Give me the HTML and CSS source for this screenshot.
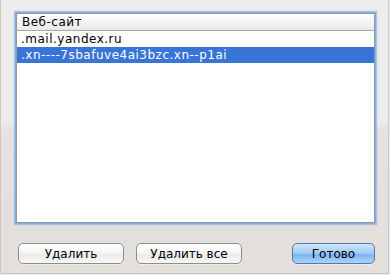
FILE: index.html
```html
<!DOCTYPE html>
<html lang="ru">
<head>
    <meta charset="UTF-8">
    <title>Веб-сайты</title>
    <link rel="stylesheet" href="styles.css">
</head>
<body>
    <div class="sheet">
        <div class="list">
            <div class="list-header">Веб-сайт</div>
            <div class="list-row">.mail.yandex.ru</div>
            <div class="list-row selected">.xn----7sbafuve4ai3bzc.xn--p1ai</div>
        </div>

        <div class="buttons">
            <button class="btn btn-wide">Удалить</button>
            <button class="btn btn-wide">Удалить все</button>
            <button class="btn btn-default">Готово</button>
        </div>
    </div>
</body>
</html>
```

FILE: styles.css
```css
* {
    margin: 0;
    padding: 0;
    box-sizing: border-box;
}

body {
    font-family: 'DejaVu Sans', sans-serif;
    font-size: 12px;
    color: #000;
    background: #e8e8e8;
    width: 390px;
    height: 275px;
    overflow: hidden;
}

.sheet {
    width: 389px;
    height: 274px;
    border: 1px solid #c9c9c9;
    border-top: none;
    background: linear-gradient(to bottom, #ececec 0, #ececec 122px, #e5e2df 130px, #e3dfdb 100%);
    padding: 13px 0 0 15px;
    display: flex;
    flex-direction: column;
}

.list {
    width: 359px;
    height: 210px;
    background: #fff;
    border: 1px solid #8f9aa6;
    box-shadow: 0 0 0 1px #7fb0e0, 0 0 1px 2px rgba(120, 170, 225, 0.6);
    letter-spacing: 0.5px;
}

.list-header {
    height: 17px;
    line-height: 16px;
    padding-left: 5px;
    background: linear-gradient(to bottom, #ffffff, #e9e9e9);
    border-bottom: 1px solid #a9a9a9;
}

.list-row {
    height: 16px;
    line-height: 16px;
    padding-left: 4px;
}

.list-row.selected {
    background-color: #3875d6;
    color: #fff;
}

.buttons {
    display: flex;
    margin-top: 20px;
    padding-left: 2px;
}

.btn {
    font-family: 'DejaVu Sans', sans-serif;
    font-size: 12px;
    height: 21px;
    border: 1px solid #8e8e8e;
    border-radius: 5px;
    background: linear-gradient(to bottom, #ffffff, #f4f4f4 50%, #e9e9e9 51%, #f7f7f7);
    color: #000;
    box-shadow: 0 1px 0 rgba(255, 255, 255, 0.5);
}

.btn-wide {
    width: 106px;
    margin-right: 12px;
}

.btn-default {
    width: 83px;
    margin-left: 38px;
    border-color: #5b76a8;
    background: linear-gradient(to bottom, #cde4fb, #9fcaf4 50%, #78b4ef 51%, #a9d4fb);
}
```
